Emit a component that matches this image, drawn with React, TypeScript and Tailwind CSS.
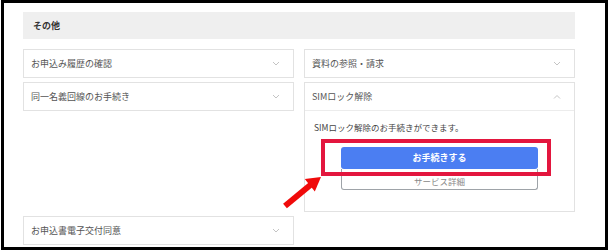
import React from 'react';

const font = { fontFamily: '"Noto Sans CJK JP", "Noto Sans", sans-serif' };

function Chevron({ up = false }: { up?: boolean }) {
  return (
    <svg width="8" height="5" viewBox="0 0 8 5" className="shrink-0">
      <polyline
        points={up ? '1,4.5 4,1.5 7,4.5' : '1,1 4,4 7,1'}
        fill="none"
        stroke="#c4c4c4"
        strokeWidth="1"
      />
    </svg>
  );
}

function Row({ label, up = false }: { label: string; up?: boolean }) {
  return (
    <div className="flex items-center justify-between h-[27px] pl-[7px] pr-[13px]">
      <span className="text-[9px] text-[#555]">{label}</span>
      <Chevron up={up} />
    </div>
  );
}

function Card({ label }: { label: string }) {
  return (
    <div className="self-start border border-[#e2e2e2] bg-white">
      <Row label={label} />
    </div>
  );
}

export default function App() {
  return (
    <div className="w-[609px] h-[252px] bg-white relative" style={font}>
      {/* screenshot frame */}
      <div className="ml-[1px] w-[607px] h-[250px] border-[3px] border-black overflow-hidden">
        <div className="w-[552px] ml-[19px] mt-[9px]">
          <div className="h-[27px] bg-[#efefef] flex items-center pl-[10px]">
            <span className="text-[9px] font-bold text-[#333]">その他</span>
          </div>

          <div className="grid grid-cols-2 gap-x-[10px] gap-y-[4px] mt-[10px]">
            <Card label="お申込み履歴の確認" />
            <Card label="資料の参照・請求" />
            <Card label="同一名義回線のお手続き" />

            <div className="self-start border border-[#e2e2e2] bg-white">
              <Row label="SIMロック解除" up />
              <div className="border-t border-[#ececec] pt-[10px] pb-[21px] px-[9px]">
                <p className="text-[8.5px] leading-[12px] text-[#444]">SIMロック解除のお手続きができます。</p>
                <div className="w-[197px] mx-auto mt-[14px] flex flex-col">
                  <button className="h-[22px] rounded-[3px] bg-[#4b7ef2] text-white text-[9px] font-bold">
                    お手続きする
                  </button>
                  <button className="h-[21px] rounded-b-[3px] border border-t-0 border-[#9ea3a8] bg-white text-[#888] text-[8.5px] leading-[10px] pt-[7px] flex justify-center">
                    サービス詳細
                  </button>
                </div>
              </div>
            </div>

            <Card label="お申込書電子交付同意" />
          </div>
        </div>
      </div>

      {/* annotation: highlight box */}
      <div className="absolute left-[321px] top-[139px] w-[230px] h-[37px] border-[4px] border-[#e3163e]" />

      {/* annotation: arrow */}
      <svg className="absolute left-[279px] top-[170px]" width="50" height="42" viewBox="0 0 50 42">
        <line x1="6" y1="36" x2="32" y2="14.5" stroke="#f00a0a" strokeWidth="6" />
        <polygon points="42,7 35.8,21.4 25.8,8.9" fill="#f00a0a" />
      </svg>
    </div>
  );
}
